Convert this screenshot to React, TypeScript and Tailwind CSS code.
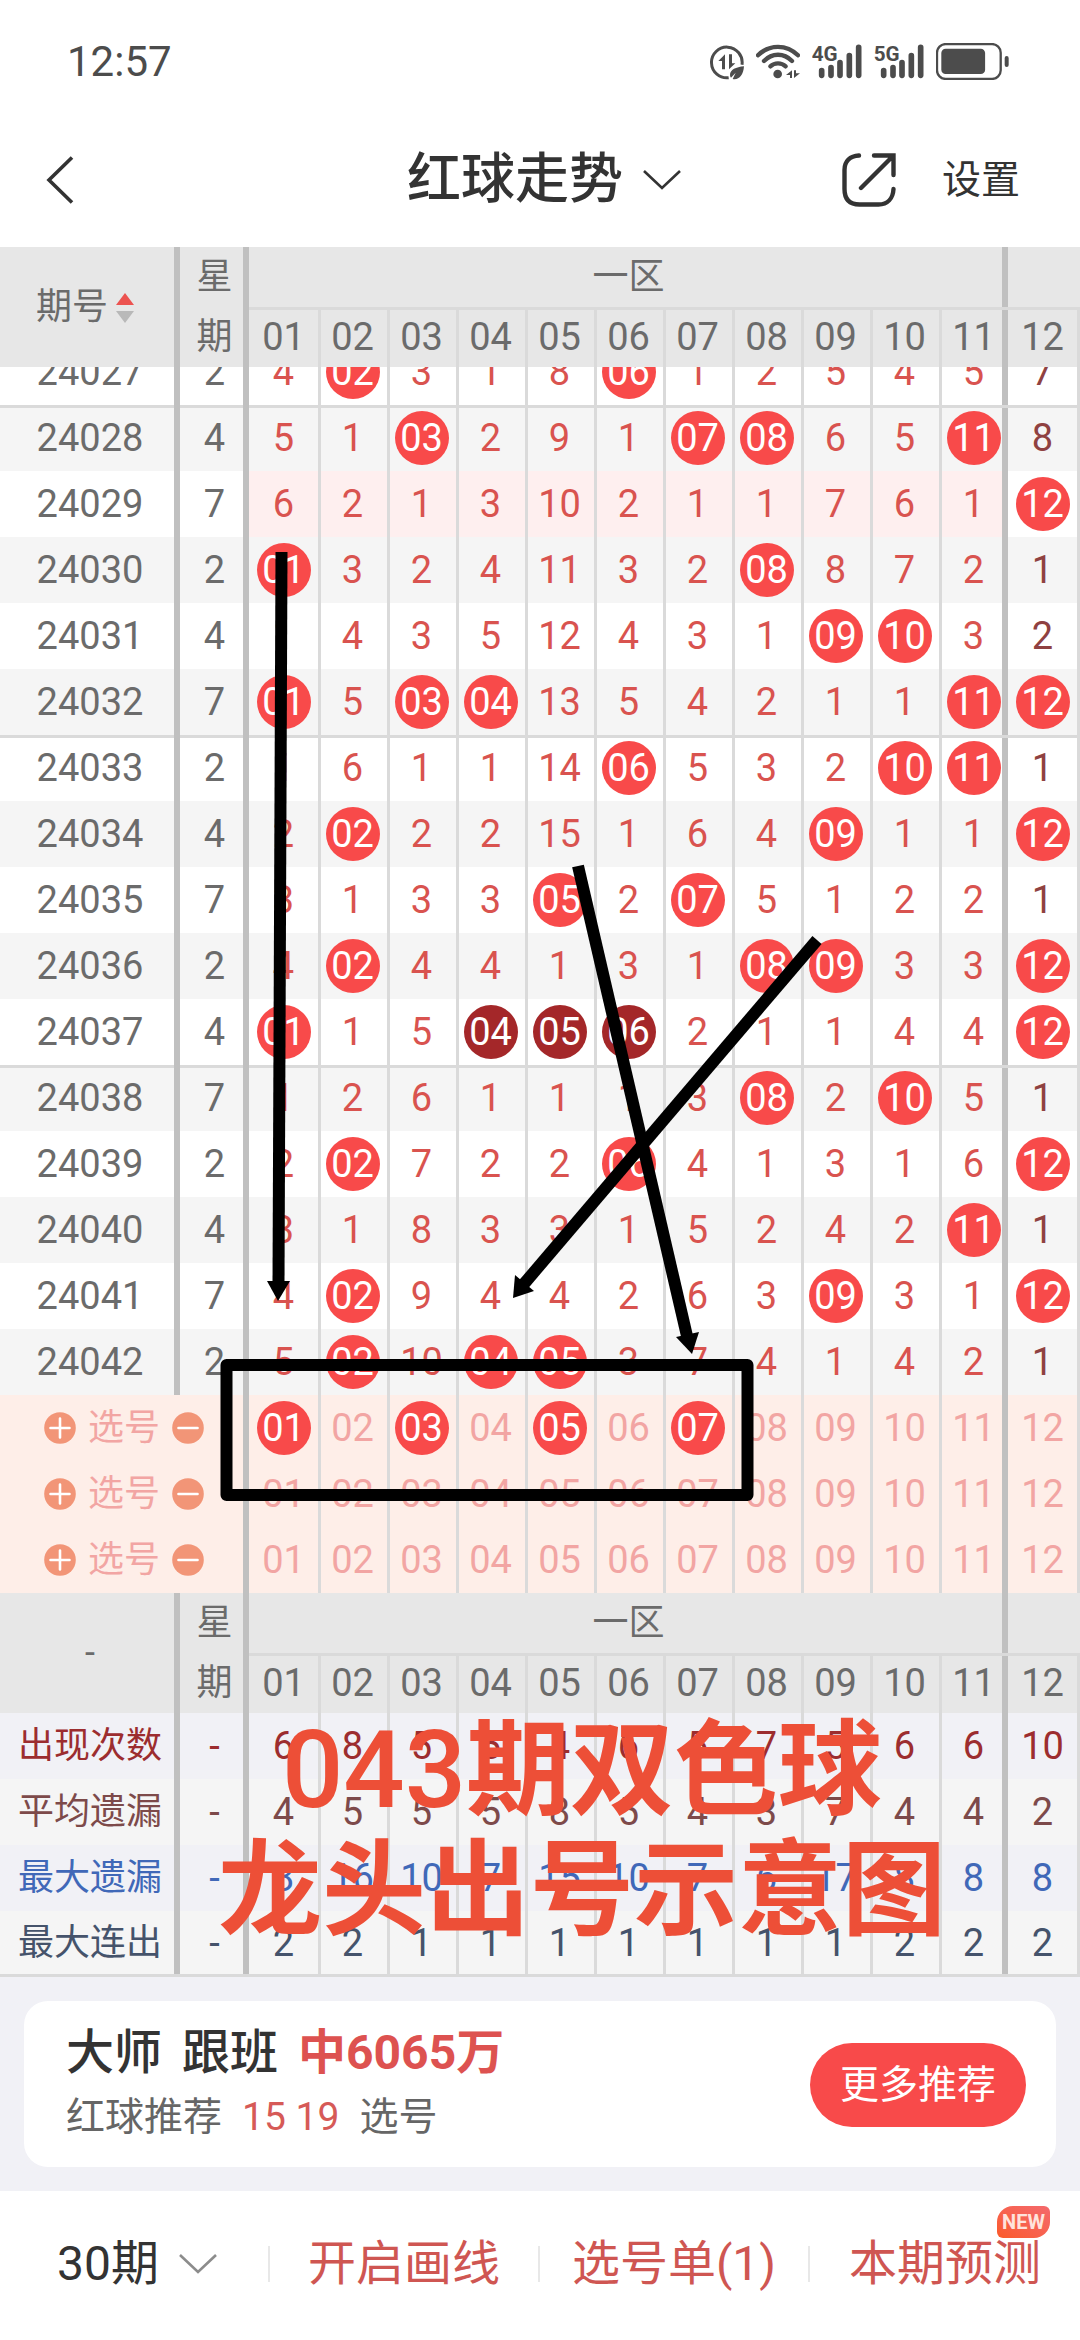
import { ReactNode } from "react";
import { clsx } from "clsx";

type Cell = number | string;

const columns = ["01", "02", "03", "04", "05", "06", "07", "08", "09", "10", "11", "12"];

// numbers are misses, strings are drawn balls ("*" marks a run of neighbours)
const draws: { issue: string; day: number; cells: Cell[]; tinted?: boolean }[] = [
  { issue: "24027", day: 2, cells: [4, "02", 3, 1, 8, "06", 1, 2, 5, 4, 5, 7] },
  { issue: "24028", day: 4, cells: [5, 1, "03", 2, 9, 1, "07", "08", 6, 5, "11", 8] },
  { issue: "24029", day: 7, cells: [6, 2, 1, 3, 10, 2, 1, 1, 7, 6, 1, "12"], tinted: true },
  { issue: "24030", day: 2, cells: ["01", 3, 2, 4, 11, 3, 2, "08", 8, 7, 2, 1] },
  { issue: "24031", day: 4, cells: [1, 4, 3, 5, 12, 4, 3, 1, "09", "10", 3, 2] },
  { issue: "24032", day: 7, cells: ["01", 5, "03", "04", 13, 5, 4, 2, 1, 1, "11", "12"] },
  { issue: "24033", day: 2, cells: [1, 6, 1, 1, 14, "06", 5, 3, 2, "10", "11", 1] },
  { issue: "24034", day: 4, cells: [2, "02", 2, 2, 15, 1, 6, 4, "09", 1, 1, "12"] },
  { issue: "24035", day: 7, cells: [3, 1, 3, 3, "05", 2, "07", 5, 1, 2, 2, 1] },
  { issue: "24036", day: 2, cells: [4, "02", 4, 4, 1, 3, 1, "08", "09", 3, 3, "12"] },
  { issue: "24037", day: 4, cells: ["01", 1, 5, "04*", "05*", "06*", 2, 1, 1, 4, 4, "12"] },
  { issue: "24038", day: 7, cells: [1, 2, 6, 1, 1, 1, 3, "08", 2, "10", 5, 1] },
  { issue: "24039", day: 2, cells: [2, "02", 7, 2, 2, "06", 4, 1, 3, 1, 6, "12"] },
  { issue: "24040", day: 4, cells: [3, 1, 8, 3, 3, 1, 5, 2, 4, 2, "11", 1] },
  { issue: "24041", day: 7, cells: [4, "02", 9, 4, 4, 2, 6, 3, "09", 3, 1, "12"] },
  { issue: "24042", day: 2, cells: [5, "02", 10, "04", "05", 3, 7, 4, 1, 4, 2, 1] },
];

const picks = [["01", "03", "05", "07"], [], []] as string[][];

const stats = [
  { label: "出现次数", className: "h-[66px] bg-[#f1f1f6] text-[#9c2d2f]", values: [6, 8, 5, 5, 4, 6, 5, 7, 5, 6, 6, 10] },
  { label: "平均遗漏", className: "h-[66px] bg-[#f5f5f5] text-[#7d4a4a]", values: [4, 5, 5, 5, 8, 5, 4, 3, 7, 4, 4, 2] },
  { label: "最大遗漏", className: "h-[66px] bg-[#f1f1f6] text-[#4068b8]", values: [8, 16, 10, 7, 15, 10, 7, 6, 17, 8, 8, 8] },
  { label: "最大连出", className: "h-[63px] bg-[#f5f5f5] text-[#45536b]", values: [2, 2, 1, 1, 1, 1, 1, 1, 1, 2, 2, 2] },
];

const BAR = "shadow-[inset_-6px_0_0_#c0c0c0]";
const BAR_TOP = "shadow-[inset_-6px_0_0_#c0c0c0,inset_0_3px_0_#dadada]";
const LINE = "shadow-[inset_3px_0_0_#dadada]";
const LINE_TOP = "shadow-[inset_3px_0_0_#dadada,inset_0_3px_0_#dadada]";
const TOP = "shadow-[inset_0_3px_0_#dadada]";
const LINE_BAR = "shadow-[inset_-6px_0_0_#c0c0c0,inset_3px_0_0_#dadada]";
const LINE_BAR_TOP = "shadow-[inset_0_3px_0_#dadada,inset_-6px_0_0_#c0c0c0,inset_3px_0_0_#dadada]";

// grid lines of a number column
function edge(i: number, top = false) {
  if (i === 0 || i === 11) return top ? TOP : "";
  if (i === 10) return top ? LINE_BAR_TOP : LINE_BAR;
  return top ? LINE_TOP : LINE;
}

function Grid({ children, className }: { children: ReactNode; className?: string }) {
  return (
    <table className={clsx("w-full table-fixed border-separate border-spacing-0 text-center text-[38px] leading-none", className)}>
      <colgroup>
        <col className="w-[180px]" />
        <col className="w-[69px]" />
        {columns.map((c) => (
          <col key={c} className="w-[69px]" />
        ))}
        <col />
      </colgroup>
      {children}
    </table>
  );
}

function GridHead({ first }: { first: ReactNode }) {
  return (
    <thead className="bg-[#e7e7e7] text-[#6b6b6b]">
      <tr className="h-[60px]">
        <th rowSpan={2} className={clsx("p-0 text-4xl leading-none font-normal", BAR)}>
          {first}
        </th>
        <th rowSpan={2} className={clsx("p-0 text-4xl leading-[60px] font-normal", BAR)}>
          <span className="block">星</span>
          <span className="block">期</span>
        </th>
        <th colSpan={11} className={clsx("p-0 text-4xl leading-none font-normal", BAR)}>
          一区
        </th>
        <th colSpan={2} className="p-0" />
      </tr>
      <tr className="h-[60px]">
        {columns.map((c, i) => (
          <th key={c} className={clsx("p-0 font-normal", edge(i, true))}>
            {c}
          </th>
        ))}
        <th className={clsx("p-0", LINE_TOP)} />
      </tr>
    </thead>
  );
}

function Ball({ value, dark }: { value: string; dark?: boolean }) {
  return (
    <span
      className={clsx(
        "mx-auto flex size-[54px] items-center justify-center rounded-full text-white",
        dark ? "bg-[#a42729]" : "bg-[#f84a4a]"
      )}
    >
      {value}
    </span>
  );
}

function DrawRows() {
  return (
    <tbody>
      {draws.map((row, r) => {
        const top = r % 5 === 1;
        return (
          <tr key={row.issue} className={clsx("h-[66px]", r % 2 ? "bg-[#f5f5f5]" : "bg-white")}>
            <td className={clsx("p-0 text-[#6b6b6b]", top ? BAR_TOP : BAR)}>{row.issue}</td>
            <td className={clsx("p-0 text-[#6b6b6b]", top ? BAR_TOP : BAR)}>{row.day}</td>
            {row.cells.map((cell, i) => (
              <td
                key={i}
                className={clsx(
                  "p-0",
                  edge(i, top),
                  i === 11 ? "text-[#8f4141]" : "text-[#d9534f]",
                  row.tinted && i < 11 && "bg-[#feefef]"
                )}
              >
                {typeof cell === "string" ? <Ball value={cell.slice(0, 2)} dark={cell.endsWith("*")} /> : cell}
              </td>
            ))}
            <td className={clsx("p-0", top ? LINE_TOP : LINE)} />
          </tr>
        );
      })}
    </tbody>
  );
}

function RoundButton({ label, minus }: { label: string; minus?: boolean }) {
  return (
    <button type="button" aria-label={label} className="size-8">
      <svg viewBox="0 0 32 32" className="size-8">
        <circle cx="16" cy="16" r="15.8" fill="#f29577" />
        <path d={minus ? "M6.5 16h19" : "M6.5 16h19M16 6.5v19"} stroke="#fff" strokeWidth="2.6" strokeLinecap="round" />
      </svg>
    </button>
  );
}

function PickRows() {
  return (
    <tbody className="bg-[#feeee8] text-[#f2a5a3]">
      {picks.map((chosen, r) => (
        <tr key={r} className="h-[66px]">
          <td colSpan={2} className={clsx("p-0", BAR)}>
            <div className="flex items-center gap-3 pl-11 text-4xl leading-none">
              <RoundButton label="添加选号" />
              <span>选号</span>
              <RoundButton label="删除选号" minus />
            </div>
          </td>
          {columns.map((c, i) => (
            <td key={c} className={clsx("p-0", edge(i))}>
              <button type="button" aria-pressed={chosen.includes(c)} className="block w-full leading-none">
                {chosen.includes(c) ? <Ball value={c} /> : c}
              </button>
            </td>
          ))}
          <td className={clsx("p-0", LINE)} />
        </tr>
      ))}
    </tbody>
  );
}

function StatRows() {
  return (
    <tbody>
      {stats.map((s) => (
        <tr key={s.label} className={s.className}>
          <th scope="row" className={clsx("p-0 text-4xl leading-none font-normal", BAR)}>
            {s.label}
          </th>
          <td className={clsx("p-0", BAR)}>-</td>
          {s.values.map((v, i) => (
            <td key={i} className={clsx("p-0", edge(i))}>
              {v}
            </td>
          ))}
          <td className={clsx("p-0", LINE)} />
        </tr>
      ))}
    </tbody>
  );
}

// hand drawn marks on top of the chart
function Marks() {
  return (
    <div className="pointer-events-none absolute inset-0 z-20">
      <svg className="absolute top-0 left-0 h-[1730px] w-[1080px]" viewBox="0 247 1080 1730" aria-hidden="true">
        <g stroke="#000" strokeWidth="12" fill="none">
          <path d="M281.5 552L278.5 1284" />
          <path d="M578 866L687 1336" />
          <path d="M817 940L523 1285" />
          <rect x="226.5" y="1365" width="521" height="130" strokeLinejoin="round" />
        </g>
        <path d="M267 1281h23l-12 20z" />
        <path d="M676 1337l23-5-7 22z" />
        <path d="M515 1275l19 16-21 7z" />
      </svg>
      <p className="absolute top-[1465px] left-[216px] w-[732px] text-center text-[104px] leading-[120px] font-bold whitespace-nowrap text-[#ed4f37]">
        <span className="text-[108px] leading-none font-medium">043</span>期双色球
        <br />
        龙头出号示意图
      </p>
    </div>
  );
}

function Signal({ label }: { label: string }) {
  return (
    <svg viewBox="0 66 150 111" className="h-[37px] w-[50px]">
      <text x="-1" y="121" fontSize="62" fontWeight="700">
        {label}
      </text>
      <path d="M29 149v14M57 140v23M84 125v38M112 104v59M140 79v84" stroke="currentColor" strokeWidth="17" strokeLinecap="round" />
    </svg>
  );
}

function StatusBar() {
  return (
    <div className="flex h-[113px] items-center justify-between pt-2.5 pr-[71px] pl-[67px] text-[#4c4c4c]">
      <span className="text-[42px] leading-none">12:57</span>
      <div className="flex items-center gap-3 [&_svg]:fill-current">
        <svg viewBox="90 66 102 111" className="h-[37px] w-[34px]">
          <path d="M186 131A46 46 0 1 0 146 170" fill="none" stroke="currentColor" strokeWidth="9" />
          <path d="M135 100v45h-9v-25h-11zM147 100v45l19-18h-10v-27z" />
          <path d="M192 136c-24 2-42 10-42 26 0 3 1 6 3 8l14-15-9 19c18 4 32-10 34-38z" />
        </svg>
        <svg viewBox="228 66 132 111" className="h-[37px] w-[44px]">
          <g fill="none" stroke="currentColor" strokeWidth="13" strokeLinecap="round">
            <path d="M234 103C268 69 320 69 354 103" />
            <path d="M252 120C276 95 312 95 336 120" />
            <path d="M271 136C284 124 304 124 317 136" />
          </g>
          <circle cx="293" cy="159" r="13" />
          <path d="M336 148v23h-6v-9h-12zM342 148h6v9h12l-18 14z" />
        </svg>
        <Signal label="4G" />
        <Signal label="5G" />
        <svg viewBox="768 66 220 111" className="h-[37px] w-[73px]">
          <rect x="771" y="69" width="192" height="105" rx="26" fill="none" stroke="currentColor" strokeWidth="7" />
          <rect x="784" y="83" width="132" height="76" rx="13" />
          <rect x="975" y="105" width="12" height="33" rx="6" />
        </svg>
      </div>
    </div>
  );
}

function Chevron() {
  return (
    <svg viewBox="0 0 38 20" className="h-5 w-[38px]" fill="none" stroke="currentColor" strokeWidth="2.6">
      <path d="M1 1l18 17L37 1" />
    </svg>
  );
}

function NavBar() {
  return (
    <header className="grid h-[134px] grid-cols-[1fr_auto_1fr] items-center text-[#333]">
      <a href="#back" aria-label="返回" className="ml-[46px] w-7">
        <svg viewBox="0 0 28 48" className="h-12 w-7" fill="none" stroke="currentColor" strokeWidth="3.6">
          <path d="M26 1.5L3 24l23 22.5" />
        </svg>
      </a>
      <button type="button" className="flex items-center gap-5 pl-2">
        <h1 className="text-[54px] leading-none font-medium">红球走势</h1>
        <Chevron />
      </button>
      <div className="flex items-center justify-end gap-[46px] pr-[60px]">
        <button type="button" aria-label="分享">
          <svg viewBox="0 0 54 54" className="size-[54px]" fill="none" stroke="currentColor" strokeWidth="4.4">
            <path d="M17 2.5C8 3 2.5 8 2.5 17v19c0 10 5 15.500 15 15.500h19c9 0 14.500-6 15-15.500" strokeLinecap="round" />
            <path d="M32 2.500h19.500V22M51 3L19 35" strokeLinecap="round" />
          </svg>
        </button>
        <a href="#settings" className="text-[39px] leading-none">
          设置
        </a>
      </div>
    </header>
  );
}

function Recommend() {
  return (
    <section className="border-t-[3px] border-[#dadada] bg-[#f1f1f6] p-6">
      <div className="flex h-[166px] items-center justify-between rounded-3xl bg-white pt-0.5 pr-[30px] pl-[42px]">
        <div>
          <p className="flex gap-5 text-[48px] leading-[64px] font-medium text-[#333]">
            <span>大师</span>
            <span>跟班</span>
            <span className="font-bold text-[#dd5250]">中6065万</span>
          </p>
          <p className="flex gap-5 text-[39px] leading-[64px] text-[#666]">
            <span>红球推荐</span>
            <span className="text-[#d65a57]">15 19</span>
            <span>选号</span>
          </p>
        </div>
        <button type="button" className="h-[84px] w-[216px] rounded-full bg-[#f84a4a] text-[39px] leading-none text-white">
          更多推荐
        </button>
      </div>
    </section>
  );
}

function BottomBar() {
  return (
    <nav className="grid h-[146px] grid-cols-4 items-center divide-x-2 divide-[#e8e8e8] text-[48px] text-[#cf5652]">
      <button type="button" className="flex h-9 items-center justify-center gap-5 pl-1.5 leading-9 text-[#333]">
        30期
        <span className="text-[#8c8c8c]">
          <Chevron />
        </span>
      </button>
      <button type="button" className="h-9 leading-9">
        开启画线
      </button>
      <button type="button" className="h-9 leading-9">
        选号单(1)
      </button>
      <a href="#forecast" className="relative h-9 text-center leading-9">
        本期预测
        <span className="absolute -top-10 right-[30px] flex h-8 w-[53px] items-center justify-center rounded-tl-2xl rounded-tr-md rounded-br-2xl rounded-bl-md bg-gradient-to-tr from-[#fb5a26] to-[#f4696c] text-xl leading-none font-bold text-[#ffe3dc]">
          NEW
        </span>
      </a>
    </nav>
  );
}

export default function App() {
  return (
    <div className="bg-white font-[family-name:Roboto,'Noto_Sans_CJK_SC',sans-serif]">
      <StatusBar />
      <NavBar />
      <main>
        <div className="relative overflow-hidden">
          <Grid className="relative z-10">
            <GridHead
              first={
                <span className="flex items-center gap-2 pl-9">
                  期号
                  <svg viewBox="0 0 18 30" className="mt-0.5 h-[30px] w-[18px]">
                    <path d="M9 0l9 12H0z" fill="#ec5350" />
                    <path d="M9 30l9-12H0z" fill="#b9b9b9" />
                  </svg>
                </span>
              }
            />
          </Grid>
          {/* list is scrolled a little under its head */}
          <Grid className="-mt-7">
            <DrawRows />
          </Grid>
          <Grid>
            <PickRows />
          </Grid>
          <Grid>
            <GridHead first="-" />
            <StatRows />
          </Grid>
          <Marks />
        </div>
        <Recommend />
      </main>
      <BottomBar />
    </div>
  );
}
